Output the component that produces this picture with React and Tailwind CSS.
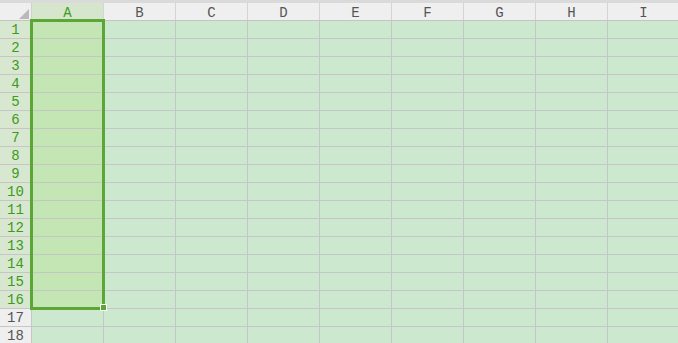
import React from 'react';

const cols = ['A', 'B', 'C', 'D', 'E', 'F', 'G', 'H', 'I'];
const rows = Array.from({ length: 18 }, (_, i) => i + 1);

const Corner = () => (
  <div className="w-[32px] shrink-0 h-full border-r border-[#d0d0d0] relative">
    <svg width="10" height="10" className="absolute left-[19px] top-[6px]">
      <polygon points="10,0 10,10 0,10" fill="#b9b9b9" />
    </svg>
  </div>
);

export default function App() {
  return (
    <div className="w-[678px] h-[343px] overflow-hidden relative bg-[#cce8cf] font-['Liberation_Mono',monospace] text-[14px] leading-none">
      <div className="h-[3px] bg-[#dadada]" />

      {/* column headers */}
      <div className="flex h-[18px] bg-[#efefef] border-b border-[#c4c4c4]">
        <Corner />
        {cols.map((c, i) => (
          <div
            key={c}
            className={`w-[72px] shrink-0 border-r border-[#d4d4d4] flex items-center justify-center pt-[3px] ${
              i === 0 ? 'bg-[#d5e6cc] text-[#3c9a1c]' : 'text-[#555555]'
            }`}
          >
            {c}
          </div>
        ))}
      </div>

      {/* rows */}
      {rows.map((r) => {
        const sel = r <= 16;
        return (
          <div key={r} className="flex h-[18px]">
            <div
              className={`w-[32px] shrink-0 border-r border-b border-[#c6c6c6] flex items-center justify-center pt-[1px] ${
                sel ? 'bg-[#d8e8d0] text-[#3c9a1c]' : 'bg-[#efefef] text-[#555555]'
              }`}
            >
              {r}
            </div>
            {cols.map((c, i) => (
              <div
                key={c}
                className={`w-[72px] shrink-0 border-r border-b border-[#c6c6c6] ${
                  sel && i === 0 ? 'bg-[#c4e6b4]' : ''
                }`}
              />
            ))}
          </div>
        );
      })}

      {/* selection box */}
      <div className="absolute left-[30px] top-[19px] w-[75px] h-[291px] border-[3px] border-[#5ca636]" />
      <div className="absolute left-[100px] top-[304px] w-[7px] h-[7px] bg-[#5ca636] border border-white" />
    </div>
  );
}
